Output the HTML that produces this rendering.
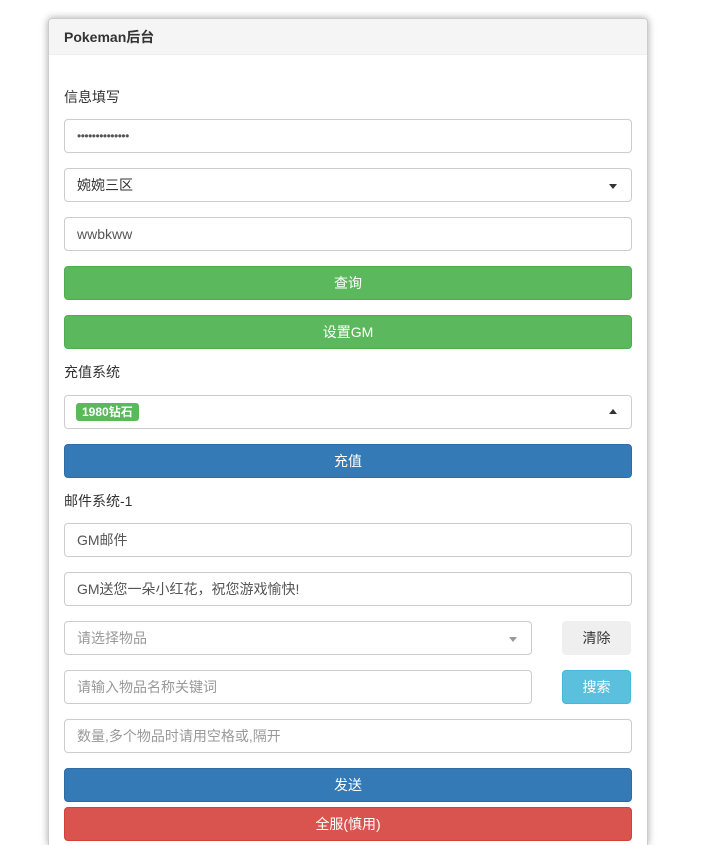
<!DOCTYPE html>
<html style="height:845px;overflow:hidden"><head><meta charset="utf-8"><style>
body{margin:0;width:705px;height:845px;background:#fff;font-family:"Liberation Sans","Noto Sans CJK SC",sans-serif;font-size:14px;color:#333;overflow:hidden;position:relative}
.panel{position:absolute;left:48px;top:18px;width:598px;height:826px;border:1px solid #ccc;border-bottom:none;border-radius:4px 4px 0 0;box-shadow:0 0 8px rgba(0,0,0,.35);background:#fff;overflow:hidden}
.hd{position:absolute;left:0;top:0;right:0;height:35px;background:#f5f5f5;border-bottom:1px solid #eee;border-radius:4px 4px 0 0;font-weight:bold;line-height:36px;padding-left:15px;font-size:14px}
.a{position:absolute;box-sizing:border-box}
.in{height:34px;border:1px solid #ccc;border-radius:4px;padding-left:12px;line-height:32px;color:#555}
.ph{color:#999}
.btn{height:34px;border-radius:4px;color:#fff;text-align:center;line-height:34px}
.g{background:#5cb85c;border:1px solid #4cae4c;line-height:32px}
.b{background:#337ab7;border:1px solid #2e6da4;line-height:32px}
.r{background:#d9534f;border:1px solid #d43f3a;line-height:32px}
.lb{left:64px}
.w{left:64px;width:568px}
.car{position:absolute;right:14px;top:15px;width:0;height:0;border-left:4px solid transparent;border-right:4px solid transparent}
</style></head><body>
<div class="panel"><div class="hd">Pokeman后台</div></div>
<div class="a lb" style="top:87px">信息填写</div>
<div class="a in w" style="top:119px;font-size:12px;letter-spacing:-0.5px">••••••••••••••</div>
<div class="a in w" style="top:168px;color:#333">婉婉三区<span class="car" style="border-top:5px solid #333"></span></div>
<div class="a in w" style="top:217px">wwbkww</div>
<div class="a btn g w" style="top:266px">查询</div>
<div class="a btn g w" style="top:315px">设置GM</div>
<div class="a lb" style="top:362px">充值系统</div>
<div class="a in w" style="top:395px"><span style="position:absolute;left:11px;top:7px;height:18px;line-height:18px;background:#5cb85c;color:#fff;font-weight:bold;font-size:12px;padding:0 6px;border-radius:3px">1980钻石</span><span class="car" style="top:13px;border-bottom:5px solid #333"></span></div>
<div class="a btn b w" style="top:444px">充值</div>
<div class="a lb" style="top:491px">邮件系统-1</div>
<div class="a in w" style="top:523px">GM邮件</div>
<div class="a in w" style="top:572px">GM送您一朵小红花，祝您游戏愉快!</div>
<div class="a in ph" style="top:621px;left:64px;width:468px">请选择物品<span class="car" style="border-top:5px solid #999"></span></div>
<div class="a btn" style="top:621px;left:562px;width:69px;background:#efefef;color:#333">清除</div>
<div class="a in ph" style="top:670px;left:64px;width:468px">请输入物品名称关键词</div>
<div class="a btn" style="top:670px;left:562px;width:69px;background:#5bc0de;border:1px solid #46b8da;line-height:32px">搜索</div>
<div class="a in ph w" style="top:719px">数量,多个物品时请用空格或,隔开</div>
<div class="a btn b w" style="top:768px">发送</div>
<div class="a btn r w" style="top:807px">全服(慎用)</div>
</body></html>
